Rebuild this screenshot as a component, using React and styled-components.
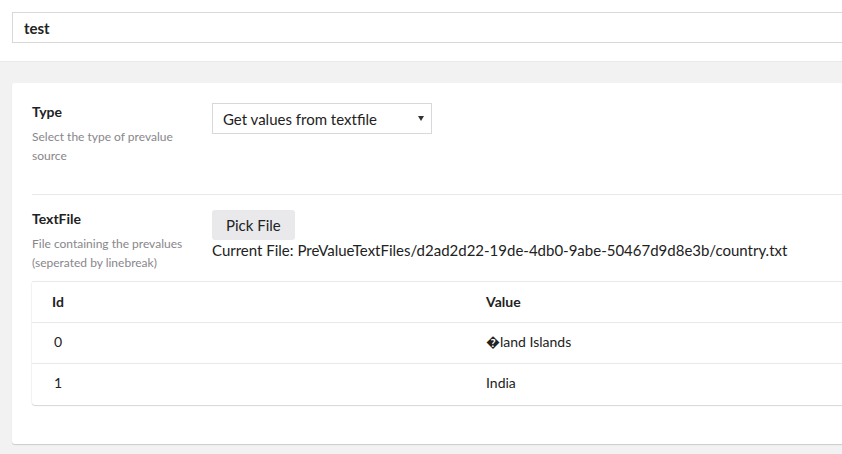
import styled, { createGlobalStyle } from 'styled-components'

const GlobalStyle = createGlobalStyle`
  html, body {
    margin: 0;
    padding: 0;
    overflow: hidden;
    background: #f3f2f2;
  }
  body {
    font-family: Lato, 'Noto Sans', sans-serif;
    color: #222;
    -webkit-font-smoothing: antialiased;
  }
`

const Page = styled.div`
  width: 932px;
  min-height: 454px;
  background: #f3f2f2;
`

const Header = styled.div`
  background: #fff;
  padding: 12px 12px 18px;
  border-bottom: 1px solid #e9e9eb;
`

const NameInput = styled.div`
  box-sizing: border-box;
  height: 31px;
  border: 1px solid #d8d7d9;
  padding: 0 11px;
  display: flex;
  align-items: center;
  font-size: 15px;
  font-weight: 700;
  color: #222;
`

const Content = styled.div`
  padding: 21px 12px;
`

const Card = styled.div`
  background: #fff;
  border-radius: 3px;
  padding: 20px;
  box-shadow: 0 1px 1px rgba(0, 0, 0, 0.16);
`

const Row = styled.div`
  display: flex;
  padding-top: ${(p) => p.$top || 0}px;
  padding-bottom: ${(p) => p.$bottom || 0}px;
  border-bottom: ${(p) => (p.$divider ? '1px solid #e9e9eb' : 'none')};
`

const LabelCol = styled.div`
  width: 180px;
  flex-shrink: 0;
`

const Label = styled.div`
  font-size: 14px;
  font-weight: 700;
  line-height: 18px;
  color: #222;
`

const Description = styled.div`
  margin-top: 6px;
  font-size: 12px;
  line-height: 19px;
  color: #88868b;
  width: 160px;
`

const Controls = styled.div`
  flex: 1;
  display: flex;
  flex-direction: column;
  align-items: flex-start;
`

const Select = styled.div`
  box-sizing: border-box;
  width: 220px;
  height: 31px;
  border: 1px solid #d8d7d9;
  padding: 0 7px 0 10px;
  display: flex;
  align-items: center;
  justify-content: space-between;
  font-size: 15px;
  color: #222;
`

const Button = styled.button`
  box-sizing: border-box;
  height: 30px;
  padding: 0 14px;
  border: none;
  border-radius: 3px;
  background: #e9e9eb;
  font-family: inherit;
  font-size: 15px;
  color: #222;
`

const FileInfo = styled.div`
  font-size: 15px;
  line-height: 20px;
  color: #222;
`

const Table = styled.table`
  width: 100%;
  margin-top: 9px;
  margin-bottom: 19px;
  border-collapse: collapse;
  table-layout: fixed;
  border-radius: 3px;
  box-shadow: 0 1px 1px rgba(0, 0, 0, 0.16), -1px 0 1px rgba(0, 0, 0, 0.04);
`

const Tr = styled.tr`
  height: 41px;
  border-top: 1px solid #e9e9eb;
`

const Th = styled.th`
  text-align: left;
  padding: 0 20px 2px;
  font-size: 14px;
  font-weight: 700;
  color: #222;
`

const Td = styled.td`
  padding: 0 20px 3px ${(p) => (p.$num ? 22 : 20)}px;
  font-size: 14px;
  color: #222;
`

const Caret = () => (
  <svg width="6" height="5" viewBox="0 0 6 5">
    <path d="M0 0 H6 L3 5 Z" fill="#333" />
  </svg>
)

const rows = [
  { id: '0', value: '\uFFFDland Islands' },
  { id: '1', value: 'India' },
]

export default function App() {
  return (
    <Page>
      <GlobalStyle />
      <Header>
        <NameInput>test</NameInput>
      </Header>
      <Content>
        <Card>
          <Row $bottom={29} $divider>
            <LabelCol>
              <Label>Type</Label>
              <Description>Select the type of prevalue source</Description>
            </LabelCol>
            <Controls>
              <Select>
                <span>Get values from textfile</span>
                <Caret />
              </Select>
            </Controls>
          </Row>
          <Row $top={15}>
            <LabelCol>
              <Label>TextFile</Label>
              <Description>File containing the prevalues (seperated by linebreak)</Description>
            </LabelCol>
            <Controls>
              <Button>Pick File</Button>
              <FileInfo>
                Current File: PreValueTextFiles/d2ad2d22-19de-4db0-9abe-50467d9d8e3b/country.txt
              </FileInfo>
            </Controls>
          </Row>
          <Table>
            <thead>
              <Tr>
                <Th>Id</Th>
                <Th>Value</Th>
              </Tr>
            </thead>
            <tbody>
              {rows.map((r) => (
                <Tr key={r.id}>
                  <Td $num>{r.id}</Td>
                  <Td>{r.value}</Td>
                </Tr>
              ))}
            </tbody>
          </Table>
        </Card>
      </Content>
    </Page>
  )
}
